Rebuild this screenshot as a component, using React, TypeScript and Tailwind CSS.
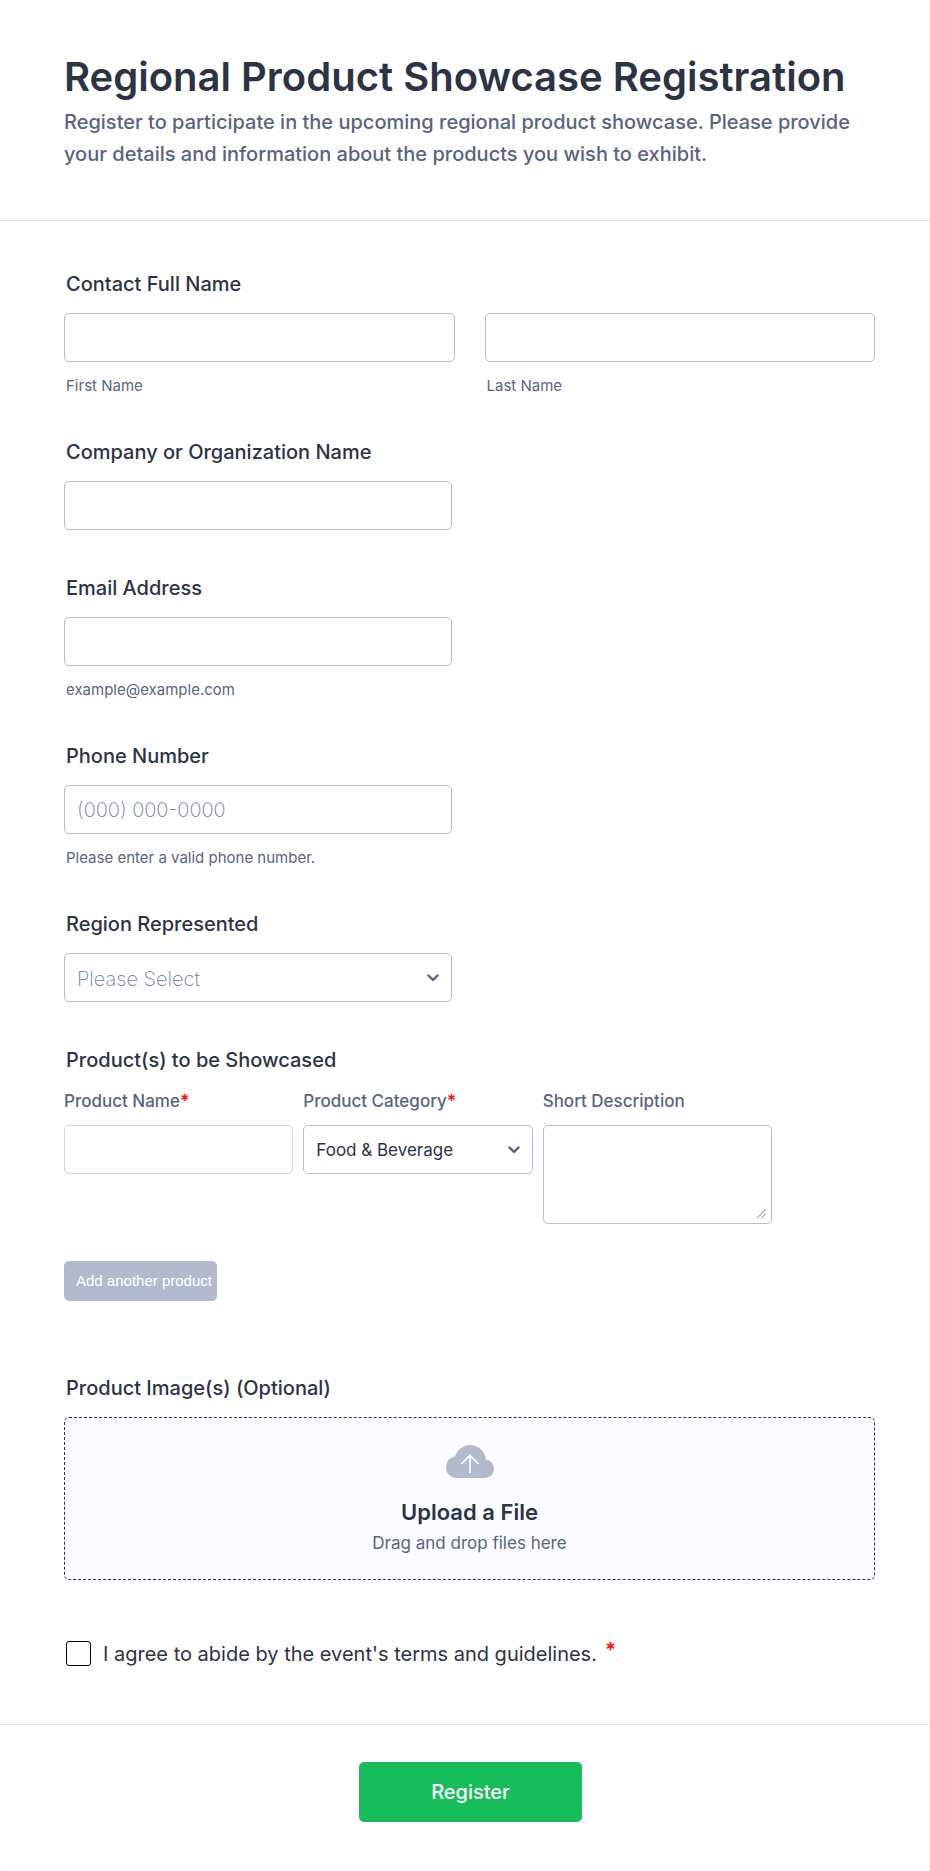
import { useState } from "react";
import type { ReactNode } from "react";
import clsx from "clsx";

const CONTROL = "block w-full rounded-[5px] border bg-white px-3 outline-none focus:border-[#0075e3]";
const FIELD = clsx(CONTROL, "h-[49px] border-[#b8bdcd]");
const REGIONS = ["North", "South", "East", "West", "Central"];
const CATEGORIES = ["Food & Beverage", "Electronics", "Apparel", "Home & Garden", "Other"];

function Label({ htmlFor, children }: { htmlFor: string; children: ReactNode }) {
  return (
    <label htmlFor={htmlFor} className="block pl-[2px] text-[20px] leading-6 font-medium">
      {children}
    </label>
  );
}

function Hint({ id, children }: { id: string; children: ReactNode }) {
  return (
    <p id={id} className="mt-4 pl-[2px] text-[15px] leading-4 text-[#57647e]">
      {children}
    </p>
  );
}

function Required() {
  return <span className="font-bold text-[#ff1414]">*</span>;
}

function ColumnLabel({ htmlFor, required, children }: { htmlFor: string; required?: boolean; children: ReactNode }) {
  return (
    <label htmlFor={htmlFor} className="mb-3 block leading-6 font-medium text-[#57647e]">
      {children}
      {required && <Required />}
    </label>
  );
}

function Chevron() {
  return (
    <svg viewBox="0 0 12 8" className="pointer-events-none absolute top-[21px] right-[13px] w-3" fill="none" aria-hidden>
      <path d="M1.5 1.5 6 6l4.5-4.5" stroke="#57647e" strokeWidth="2.4" strokeLinecap="round" strokeLinejoin="round" />
    </svg>
  );
}

function CloudIcon() {
  return (
    <svg viewBox="0 0 48 33" className="w-12" fill="none" aria-hidden>
      <path
        d="M11 33C4.900 33 0 28.500 0 22.500c0-5.700 3.600-10.300 9-11C11 5 17 0 24 0c8.500 0 15 6.500 16 14.500 4.600.6 8 4.400 8 9.200C48 29 43.800 33 38.500 33Z"
        fill="#b1bbcd"
      />
      <path d="M24 28V10.500M15.500 19 24 10.500l8.500 8.500" stroke="#fff" strokeWidth="1.600" />
    </svg>
  );
}

export default function App() {
  const [region, setRegion] = useState("");
  const [agreed, setAgreed] = useState(false);

  return (
    <div className="bg-[#f7f7fa] pr-px font-['Inter',sans-serif] text-[#2c3345]">
      <form className="rounded-[4px] bg-white" onSubmit={(e) => e.preventDefault()}>
        <header className="border-b border-[#d7d8e1] pt-[53px] pr-[54px] pb-[50px] pl-16">
          <h1 className="text-[40px] leading-[48px] font-semibold">Regional Product Showcase Registration</h1>
          <p className="mt-[5px] text-[20px] leading-8 font-medium text-[#57647e]">
            Register to participate in the upcoming regional product showcase. Please provide your details and
            information about the products you wish to exhibit.
          </p>
        </header>

        <div className="flex flex-col gap-[46px] pt-[51px] pr-[54px] pb-[58px] pl-16">
          <div>
            <Label htmlFor="first">Contact Full Name</Label>
            <div className="mt-[17px] grid grid-cols-2 gap-[30px]">
              <div>
                <input id="first" type="text" aria-describedby="first-hint" className={FIELD} />
                <Hint id="first-hint">First Name</Hint>
              </div>
              <div>
                <input id="last" type="text" aria-labelledby="last-hint" className={FIELD} />
                <Hint id="last-hint">Last Name</Hint>
              </div>
            </div>
          </div>

          <div>
            <Label htmlFor="company">Company or Organization Name</Label>
            <div className="mt-[17px] max-w-[388px]">
              <input id="company" type="text" className={FIELD} />
            </div>
          </div>

          <div>
            <Label htmlFor="email">Email Address</Label>
            <div className="mt-[17px] max-w-[388px]">
              <input id="email" type="email" aria-describedby="email-hint" className={FIELD} />
              <Hint id="email-hint">example@example.com</Hint>
            </div>
          </div>

          <div>
            <Label htmlFor="phone">Phone Number</Label>
            <div className="mt-[17px] max-w-[388px]">
              <input
                id="phone"
                type="tel"
                placeholder="(000) 000-0000"
                aria-describedby="phone-hint"
                className={clsx(FIELD, "text-[20px] font-extralight placeholder:text-[#6c7d93]")}
              />
              <Hint id="phone-hint">Please enter a valid phone number.</Hint>
            </div>
          </div>

          <div>
            <Label htmlFor="region">Region Represented</Label>
            <div className="relative mt-[17px] max-w-[388px]">
              <select
                id="region"
                value={region}
                onChange={(e) => setRegion(e.target.value)}
                className={clsx(FIELD, "appearance-none pt-[2px] text-[20px] font-extralight text-[#6c7d93]")}
              >
                <option value="">Please Select</option>
                {REGIONS.map((r) => (
                  <option key={r}>{r}</option>
                ))}
              </select>
              <Chevron />
            </div>
          </div>

          <fieldset>
            <legend className="pl-[2px] text-[20px] leading-6 font-medium">Product(s) to be Showcased</legend>
            <div className="mt-[17px] grid max-w-[708px] grid-cols-3 gap-[10px] text-[17px]">
              <div>
                <ColumnLabel htmlFor="product" required>
                  Product Name
                </ColumnLabel>
                <input id="product" type="text" required className={clsx(CONTROL, "h-[49px] border-[#d0d3df]")} />
              </div>
              <div>
                <ColumnLabel htmlFor="category" required>
                  Product Category
                </ColumnLabel>
                <div className="relative">
                  <select id="category" required className={clsx(FIELD, "appearance-none pt-[2px]")}>
                    {CATEGORIES.map((c) => (
                      <option key={c}>{c}</option>
                    ))}
                  </select>
                  <Chevron />
                </div>
              </div>
              <div>
                <ColumnLabel htmlFor="description">Short Description</ColumnLabel>
                <div className="relative">
                  <textarea id="description" className={clsx(CONTROL, "h-[99px] resize-none border-[#b8bdcd] py-3")} />
                  <svg
                    viewBox="0 0 9 9"
                    className="pointer-events-none absolute right-[6px] bottom-[6px] w-[9px]"
                    stroke="#a9aec0"
                    strokeWidth="1.200"
                    strokeLinecap="round"
                    aria-hidden
                  >
                    <path d="M.5 8.500l8-8M5 8.500 8.500 5" />
                  </svg>
                </div>
              </div>
            </div>
            <button
              type="button"
              className="mt-[37px] h-10 rounded-[5px] bg-[#b1bbcd] pr-[5px] pl-3 font-['Liberation_Sans',sans-serif] text-[15px] text-white"
            >
              Add another product
            </button>
          </fieldset>

          <div className="mt-[29px]">
            <Label htmlFor="files">Product Image(s) (Optional)</Label>
            <label
              htmlFor="files"
              className="mt-[17px] flex h-[163px] cursor-pointer flex-col items-center rounded-[5px] border border-dashed border-[#2c3345] bg-[#fafcff] pt-[27px]"
            >
              <CloudIcon />
              <span className="mt-5 text-[22px] leading-7 font-semibold">Upload a File</span>
              <span className="mt-[5px] text-[17px] leading-6 text-[#57647e]">Drag and drop files here</span>
              <input id="files" type="file" multiple className="sr-only" />
            </label>
          </div>

          <div className="mt-[15px] flex items-center pl-[2px]">
            <input
              id="terms"
              type="checkbox"
              required
              checked={agreed}
              onChange={(e) => setAgreed(e.target.checked)}
              className="size-[25px] shrink-0 appearance-none rounded-[3px] border border-black checked:bg-[#2c3345]"
            />
            <label htmlFor="terms" className="ml-3 flex gap-2 text-[20px] leading-6">
              I agree to abide by the event's terms and guidelines.
              <span className="leading-4">
                <Required />
              </span>
            </label>
          </div>
        </div>

        <footer className="flex justify-center border-t border-[#e6e6f0] pt-[37px] pb-[49px] pl-3">
          <button
            type="submit"
            className="h-[60px] w-[223px] rounded-[5px] bg-[#18bd5b] text-[20px] font-medium text-white"
          >
            Register
          </button>
        </footer>
      </form>
    </div>
  );
}
